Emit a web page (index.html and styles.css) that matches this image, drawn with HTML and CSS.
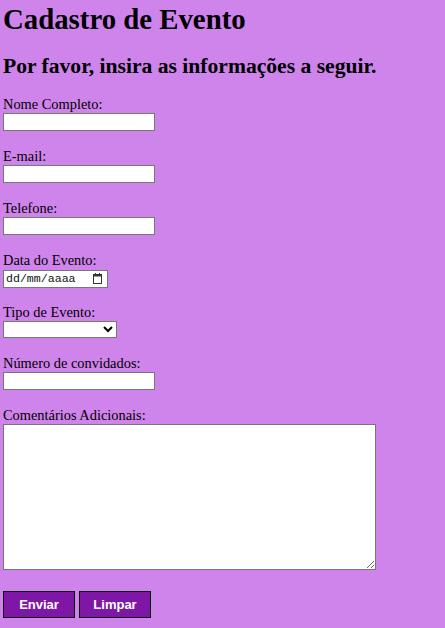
FILE: index.html
```html
<!DOCTYPE html>
<html lang="pt-BR">
<head>
<meta charset="utf-8">
<title>Cadastro de Evento</title>
<link rel="stylesheet" href="styles.css">
</head>
<body>
<h1 class="title">Cadastro de Evento</h1>
<h2 class="subtitle">Por favor, insira as informações a seguir.</h2>
<form class="form">
  <div class="field">
    <label class="label" for="nome">Nome Completo:</label>
    <input class="text" type="text" id="nome">
  </div>
  <div class="field">
    <label class="label" for="email">E-mail:</label>
    <input class="text" type="email" id="email">
  </div>
  <div class="field">
    <label class="label" for="tel">Telefone:</label>
    <input class="text" type="tel" id="tel">
  </div>
  <div class="field">
    <label class="label" for="data">Data do Evento:</label>
    <span class="date-wrap">
      <input class="date" type="text" id="data" placeholder="dd/mm/aaaa">
      <svg class="cal" width="9" height="11" viewBox="0 0 9 11" aria-hidden="true">
        <rect x="0.5" y="1.5" width="8" height="9" fill="none" stroke="#333" stroke-width="1"/>
        <rect x="0.5" y="1.5" width="8" height="2" fill="#333"/>
        <rect x="2" y="0" width="1" height="2" fill="#333"/>
        <rect x="6" y="0" width="1" height="2" fill="#333"/>
      </svg>
    </span>
  </div>
  <div class="field">
    <label class="label" for="tipo">Tipo de Evento:</label>
    <select class="select" id="tipo"><option value=""></option></select>
  </div>
  <div class="field">
    <label class="label" for="conv">Número de convidados:</label>
    <input class="text" type="number" id="conv">
  </div>
  <div class="field">
    <label class="label" for="com">Comentários Adicionais:</label>
    <textarea class="area" id="com"></textarea>
  </div>
  <div class="actions">
    <button class="btn" type="submit">Enviar</button>
    <button class="btn" type="reset">Limpar</button>
  </div>
</form>
</body>
</html>
```
FILE: styles.css
```css
html, body {
  background: #cf84eb;
}
body {
  margin: 0;
  padding: 3px;
  font-family: "Liberation Serif", "Times New Roman", serif;
  font-size: 14.4px;
  color: #000;
}
.title {
  font-size: 28.8px;
  margin: 0 0 18px;
  line-height: 33px;
}
.subtitle {
  font-size: 21.6px;
  margin: 0 0 17px;
  line-height: 25px;
}
.field {
  display: flex;
  flex-direction: column;
  align-items: flex-start;
  margin-bottom: 17px;
}
.label {
  line-height: 17px;
}
.text, .date, .select, .area {
  box-sizing: border-box;
  border: 1px solid #767676;
  background: #fff;
  margin: 0;
  font-family: "Liberation Sans", sans-serif;
  font-size: 13px;
}
.text {
  width: 152px;
  height: 18px;
  padding: 1px 2px;
}
.date-wrap {
  position: relative;
  display: block;
  width: 105px;
  height: 18px;
}
.date {
  width: 105px;
  height: 18px;
  padding: 0 2px;
  font-family: "Liberation Mono", monospace;
  font-size: 11.6px;
}
.date::placeholder {
  color: #111;
  opacity: 1;
}
.cal {
  position: absolute;
  right: 6px;
  top: 4px;
}
.select {
  width: 114px;
  height: 17px;
  padding: 0;
  border-radius: 0;
}
.area {
  width: 373px;
  height: 146px;
}
.actions {
  display: flex;
  gap: 4px;
  margin-top: 21px;
}
.btn {
  box-sizing: border-box;
  width: 72px;
  height: 27px;
  background: #7e17a5;
  color: #fff;
  border: 1px solid #000;
  font-family: "Liberation Sans", sans-serif;
  font-weight: bold;
  font-size: 13px;
  padding: 0;
}
```
